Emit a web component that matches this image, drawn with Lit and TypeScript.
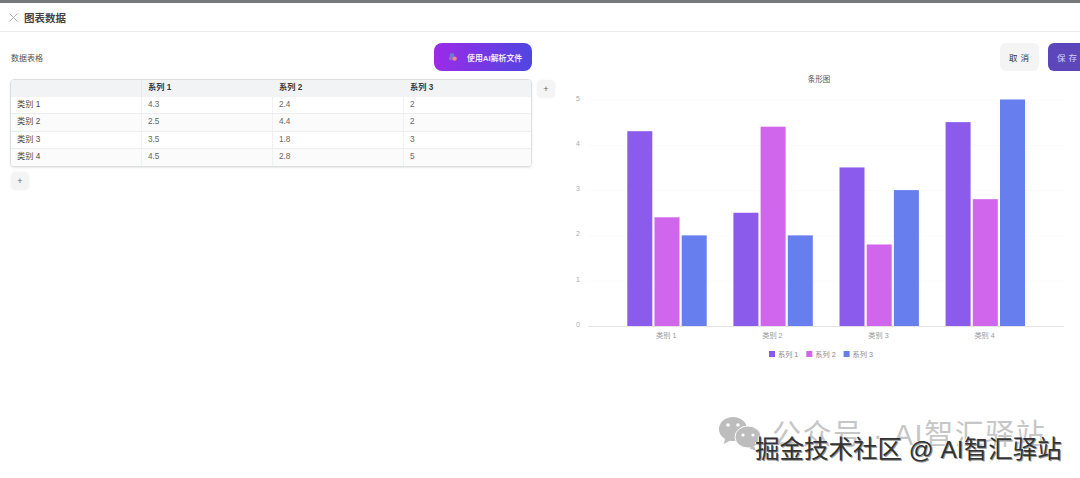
import { LitElement, html, css, svg } from "lit";
import { customElement } from "lit/decorators.js";

const CATS = ["类别 1", "类别 2", "类别 3", "类别 4"];
const SERIES = ["系列 1", "系列 2", "系列 3"];
const COLORS = ["#8b5bec", "#cf66ec", "#667eee"];
const DATA = [
  [4.3, 2.4, 2],
  [2.5, 4.4, 2],
  [3.5, 1.8, 3],
  [4.5, 2.8, 5],
];

const CW = 525; // svg width
const X0 = 33; // axis left within svg
const AXIS_END = 509; // axis right within svg
const BASE = 252; // baseline y within svg
const UNIT = 45.3;
const GROUP = 106.1;
const BAR = 25;
const STEP = 27.2;
const FIRST = 72.3;

@customElement("app-root")
export class AppRoot extends LitElement {
  static styles = css`
    :host {
      display: block;
      position: relative;
      width: 1080px;
      height: 478px;
      overflow: hidden;
      background: #fff;
      font-family: "Liberation Sans", "Noto Sans CJK SC", sans-serif;
      color: #333;
    }
    .strip { height: 3px; background: #77787a; }
    .head {
      height: 28px;
      display: flex;
      align-items: center;
      gap: 6px;
      padding-left: 9px;
      border-bottom: 1px solid #ececec;
      box-sizing: content-box;
    }
    .head svg { width: 9px; height: 9px; display: block; }
    .title { font-size: 10.5px; font-weight: 700; color: #444; }
    .main { display: flex; padding: 11px 0 0 10px; }
    .left { width: 545px; flex: none; }
    .toolbar {
      display: flex;
      align-items: center;
      justify-content: space-between;
      width: 522px;
      height: 28px;
      font-size: 8px;
      color: #555;
    }
    .toolbar .lbl { padding-left: 1px; }
    .ai {
      width: 98px;
      height: 28px;
      border-radius: 8px;
      background: linear-gradient(90deg, #9b2be8, #4f46e0);
      color: #f1e6ff;
      display: flex;
      align-items: center;
      gap: 9px;
      padding-left: 14px;
      box-sizing: border-box;
      font-size: 7.9px;
      font-weight: 700;
    }
    .ai svg { width: 10px; height: 10px; flex: none; }
    .tbl-row { display: flex; gap: 5px; margin-top: 8px; align-items: flex-start; }
    .tbl {
      width: 522px;
      box-sizing: border-box;
      border: 1px solid #dcdfe0;
      border-radius: 4px;
      box-shadow: 0 1px 2px rgba(0, 0, 0, 0.1);
      overflow: hidden;
      display: grid;
      grid-template-columns: 131px 131px 131px 1fr;
      font-size: 8.2px;
      color: #666;
    }
    .c {
      height: 17.25px;
      box-sizing: border-box;
      padding-left: 6px;
      line-height: 16px;
      border-bottom: 1px solid #ebedee;
      border-right: 1px solid #f0f1f2;
      white-space: nowrap;
    }
    .c.h {
      height: 17px;
      background: #f1f3f4;
      font-weight: 700;
      color: #3a3a3a;
      border-right-color: transparent;
      border-bottom-color: #f1f3f4;
    }
    .c.h:first-child { border-right-color: #e6e8e9; }
    .c.alt { background: #fbfbfb; }
    .c.last { border-bottom: none; }
    .c.end { border-right: none; }
    .c.name { color: #4a4a4a; }
    .plus {
      width: 18px;
      height: 18px;
      border-radius: 5px;
      background: #f4f4f4;
      box-shadow: 0 0 3px rgba(0, 0, 0, 0.05);
      color: #666;
      font-size: 9px;
      line-height: 18px;
      text-align: center;
      flex: none;
    }
    .tbl-row .plus { margin-top: 1px; }
    .plus.bottom { margin: 5px 0 0 1px; }
    .right { flex: 1; min-width: 0; }
    .actions {
      display: flex;
      justify-content: flex-end;
      gap: 9px;
      height: 28px;
      margin-right: -7px;
    }
    .btn {
      height: 28px;
      border-radius: 6px;
      font-family: "Liberation Serif", "Noto Sans CJK SC", serif;
      font-size: 8.5px;
      letter-spacing: 3px;
      padding-left: 2px;
      display: flex;
      align-items: center;
      justify-content: center;
      box-sizing: border-box;
    }
    .cancel { width: 39px; background: #f4f4f4; color: #333; }
    .save { width: 39px; background: #5d46ba; color: #d9d2f4; }
    .chart { display: block; margin-top: 3px; overflow: visible; }
    .chart text { font-family: "Liberation Sans", "Noto Sans CJK SC", sans-serif; }
    .wm { position: absolute; white-space: nowrap; }
    .wm-icon { left: 718px; top: 415px; width: 44px; height: 36px; }
    .wm-a { left: 772px; top: 411px; font-size: 29px; letter-spacing: 1.5px; color: #c6c6c6; }
    .wm-b {
      left: 755px;
      top: 430px;
      font-size: 24.5px;
      color: #333;
      text-shadow: 1px 1px 0 #999, -1px 0 0 #fff;
    }
  `;

  private chart() {
    const h = 300;
    return html`<svg class="chart" width=${CW} height=${h} viewBox="0 0 ${CW} ${h}">
      <text x="264" y="8" font-size="7.5" fill="#555" text-anchor="middle">条形图</text>
      ${[0, 1, 2, 3, 4, 5].map((v) => {
        const y = BASE - v * UNIT;
        return svg`
          <line x1=${X0} x2=${AXIS_END} y1=${y + 0.5} y2=${y + 0.5} stroke=${v === 0 ? "#e4e4e6" : "#fbfbfb"} />
          <text x="23" y=${y + 1} font-size="7" fill="#aaa" text-anchor="middle">${v}</text>`;
      })}
      ${DATA.map((row, g) =>
        row.map((v, s) => {
          const x = FIRST + g * GROUP + s * STEP;
          const bh = v * UNIT;
          return svg`<rect x=${x} y=${BASE - bh} width=${BAR} height=${bh} fill=${COLORS[s]} />`;
        })
      )}
      ${CATS.map(
        (c, g) =>
          svg`<text x=${FIRST + 39 + g * GROUP} y="264" font-size="7.2" fill="#999" text-anchor="middle">${c}</text>`
      )}
      ${SERIES.map((s, i) => {
        const x = 214 + i * 37.3;
        return svg`
          <rect x=${x} y="277" width="6" height="6" fill=${COLORS[i]} />
          <text x=${x + 9} y="282.5" font-size="7.2" fill="#888">${s}</text>`;
      })}
    </svg>`;
  }

  render() {
    return html`
      <div class="strip"></div>
      <div class="head">
        <svg viewBox="0 0 9 9"><path d="M.5.5l8 8M8.5.5l-8 8" stroke="#aaa" stroke-width=".9" fill="none" /></svg>
        <span class="title">图表数据</span>
      </div>
      <div class="main">
        <div class="left">
          <div class="toolbar">
            <span class="lbl">数据表格</span>
            <div class="ai">
              <svg viewBox="0 0 10 10">
                <circle cx="4" cy="3.2" r="2.2" fill="#6a7fd0" />
                <circle cx="2.8" cy="6.6" r="2" fill="#8a6fc8" />
                <circle cx="6.6" cy="6.6" r="2.2" fill="#f08a8a" />
              </svg>
              <span>使用AI解析文件</span>
            </div>
          </div>
          <div class="tbl-row">
            <div class="tbl">
              <div class="c h"></div>
              ${SERIES.map((s, i) => html`<div class="c h ${i === 2 ? "end" : ""}">${s}</div>`)}
              ${DATA.map(
                (row, r) => html`
                  <div class="c name ${r % 2 ? "alt" : ""} ${r === 3 ? "last" : ""}">${CATS[r]}</div>
                  ${row.map(
                    (v, i) =>
                      html`<div class="c ${r % 2 ? "alt" : ""} ${r === 3 ? "last" : ""} ${i === 2 ? "end" : ""}">${v}</div>`
                  )}
                `
              )}
            </div>
            <div class="plus">+</div>
          </div>
          <div class="plus bottom">+</div>
        </div>
        <div class="right">
          <div class="actions">
            <div class="btn cancel">取消</div>
            <div class="btn save">保存</div>
          </div>
          ${this.chart()}
        </div>
      </div>
      <svg class="wm wm-icon" viewBox="0 0 44 36">
        <ellipse cx="15" cy="14" rx="14" ry="12" fill="#bdbdbd" />
        <path d="M7 23l-1 6 7-4z" fill="#bdbdbd" />
        <circle cx="10" cy="10" r="1.8" fill="#fff" />
        <circle cx="20" cy="10" r="1.8" fill="#fff" />
        <ellipse cx="30" cy="22" rx="13" ry="11" fill="#bdbdbd" stroke="#fff" stroke-width="1" />
        <path d="M36 31l2 5-7-3z" fill="#bdbdbd" />
        <circle cx="25" cy="20" r="1.6" fill="#fff" />
        <circle cx="35" cy="20" r="1.6" fill="#fff" />
      </svg>
      <div class="wm wm-a">公众号 · AI智汇驿站</div>
      <div class="wm wm-b">掘金技术社区 @ AI智汇驿站</div>
    `;
  }
}
